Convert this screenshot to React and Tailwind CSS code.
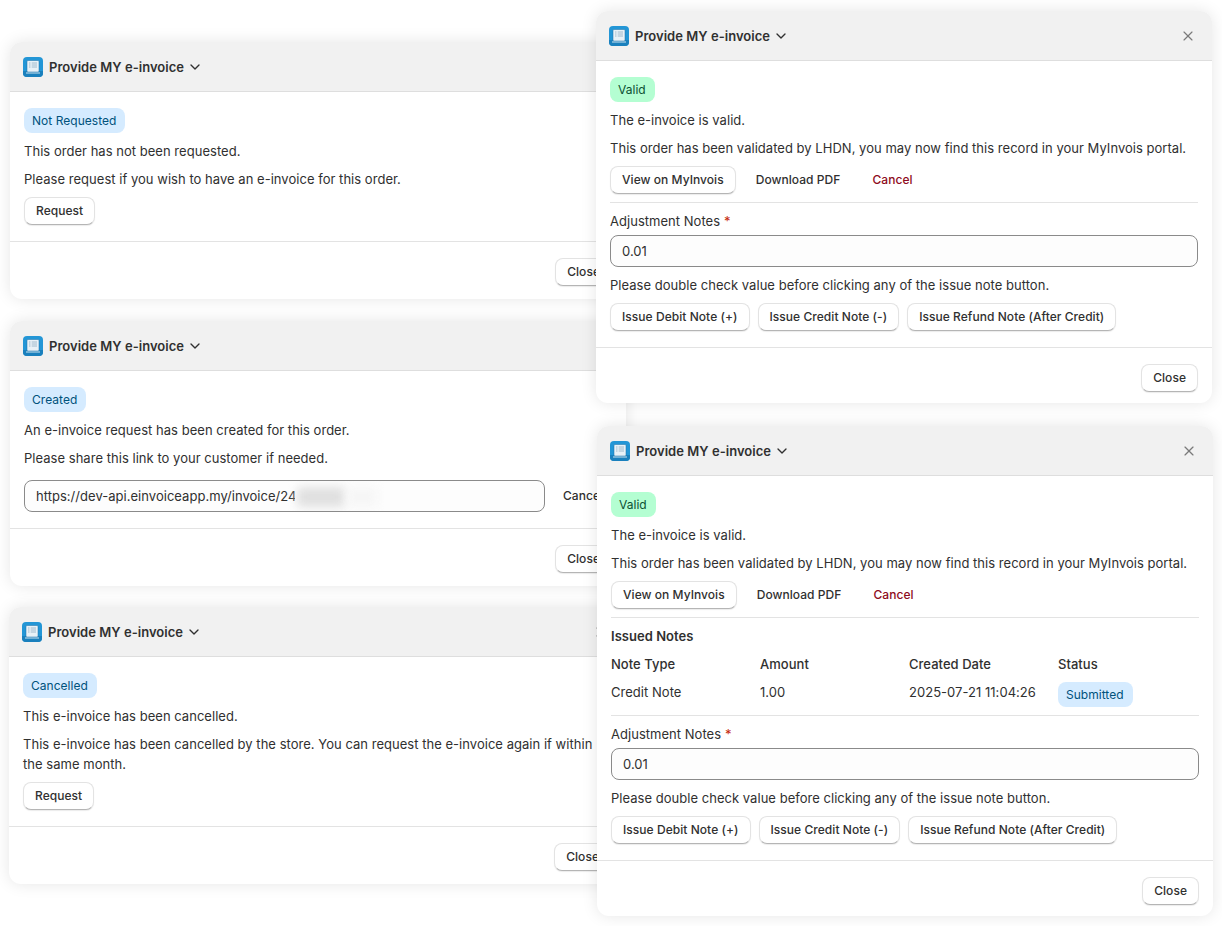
import React from 'react';
import { ChevronDown, X } from 'lucide-react';

const AppIcon = () => (
  <svg width="20" height="20" viewBox="0 0 20 20" className="shrink-0">
    <rect width="20" height="20" rx="4" fill="#2396d6" />
    <path d="M0 14 L20 14 V16 A4 4 0 0 1 16 20 H4 A4 4 0 0 1 0 16 Z" fill="#1a80bd" />
    <rect x="4" y="3.5" width="12" height="11.5" rx="1" fill="#e8f1f7" stroke="#1a6fa5" strokeWidth="0.5" />
    <path d="M3 15.5 H17 V16.4 H3 Z" fill="#c9e2f0" />
    <path d="M6 6 H7.5 M6 8 H7.5 M6 10 H7.5 M8.7 6 H14 M8.7 8 H14 M8.7 10 H14" stroke="#8fadc1" strokeWidth="0.8" />
  </svg>
);

const Button = ({ children }) => (
  <button className="h-7 px-[11px] rounded-lg bg-white text-xs tracking-[0.05px] text-[#303030] font-medium border border-[#e3e3e3] border-b-[#b5b5b5] shadow-[0_1px_1px_rgba(0,0,0,0.08)] whitespace-nowrap">
    {children}
  </button>
);

const PlainButton = ({ children, danger }) => (
  <button className={`h-7 px-3 shrink-0 text-xs tracking-[0.05px] font-medium whitespace-nowrap ${danger ? 'text-[#8e0b21]' : 'text-[#303030]'}`}>
    {children}
  </button>
);

const Badge = ({ children, green }) => (
  <span className={`self-start justify-self-start h-[25px] pl-2 pr-[9px] rounded-lg text-xs flex items-center ${green ? 'bg-[#b4fed2] text-[#0c5132]' : 'bg-[#d5ebff] text-[#00527c]'}`}>
    {children}
  </span>
);

const Divider = () => <div className="h-px bg-[#e3e3e3]" />;

const Modal = ({ className, footerClass, children }) => (
  <div className={`absolute rounded-xl bg-white overflow-hidden shadow-[0_0_16px_rgba(0,0,0,0.1)] ${className}`}>
    <div className="h-[50px] px-[13px] bg-[#f1f1f1] border-b border-[#dedede] flex items-center">
      <AppIcon />
      <span className="ml-1.5 text-[13px] font-semibold text-[#303030]">Provide MY e-invoice</span>
      <ChevronDown size={16} className="ml-[3px] text-[#303030]" />
      <X size={16} strokeWidth={1.75} className="ml-auto mr-[3px] text-[#7a7a7a]" />
    </div>
    <div className="px-[14px] pt-4 pb-4 flex flex-col gap-2">{children}</div>
    <div className={`border-t border-[#e3e3e3] px-[14px] pt-4 flex justify-end ${footerClass}`}>
      <Button>Close</Button>
    </div>
  </div>
);

const IssueSection = () => (
  <>
    <div className="flex items-center gap-1">
      <span>Adjustment Notes</span>
      <span className="text-[#c5280c]">*</span>
    </div>
    <div className="h-8 -mt-1 px-[11px] rounded-lg border border-[#8a8a8a] bg-[#fdfdfd] flex items-center">0.01</div>
    <p>Please double check value before clicking any of the issue note button.</p>
    <div className="flex gap-2">
      <Button>Issue Debit Note (+)</Button>
      <Button>Issue Credit Note (-)</Button>
      <Button>Issue Refund Note (After Credit)</Button>
    </div>
  </>
);

const ValidHead = () => (
  <>
    <Badge green>Valid</Badge>
    <p>The e-invoice is valid.</p>
    <p>This order has been validated by LHDN, you may now find this record in your MyInvois portal.</p>
    <div className="flex gap-2">
      <Button>View on MyInvois</Button>
      <PlainButton>Download PDF</PlainButton>
      <PlainButton danger>Cancel</PlainButton>
    </div>
    <Divider />
  </>
);

export default function App() {
  return (
    <div className="relative w-[1222px] h-[926px] bg-white overflow-hidden text-[13px] leading-5 tracking-[0.03px] text-[#303030] font-['Inter',sans-serif]">
      <Modal className="left-[10px] top-[42px] w-[616px]" footerClass="pb-[13px]">
        <Badge>Not Requested</Badge>
        <p>This order has not been requested.</p>
        <p>Please request if you wish to have an e-invoice for this order.</p>
        <div><Button>Request</Button></div>
      </Modal>

      <Modal className="left-[10px] top-[321px] w-[616px]" footerClass="pb-[13px]">
        <Badge>Created</Badge>
        <p>An e-invoice request has been created for this order.</p>
        <p>Please share this link to your customer if needed.</p>
        <div className="flex items-center gap-1.5 mt-1">
          <div className="relative w-[521px] shrink-0 h-8 px-[11px] rounded-lg border border-[#8a8a8a] bg-[#fdfdfd] flex items-center overflow-hidden">
            <span>https://dev-api.einvoiceapp.my/invoice/24</span>
            <div className="absolute left-[270px] top-1 w-[52px] h-6 bg-[#fdfdfd]" />
            <div className="absolute left-[272px] top-1.5 w-[48px] h-5 rounded bg-[#e0e0e0] blur-[5px]" />
            <div className="absolute left-[322px] top-1.5 w-[30px] h-5 bg-[#f6f6f6] blur-[5px]" />
          </div>
          <PlainButton>Cancel</PlainButton>
        </div>
      </Modal>

      <Modal className="left-[9px] top-[607px] w-[616px]" footerClass="pb-[13px]">
        <Badge>Cancelled</Badge>
        <p>This e-invoice has been cancelled.</p>
        <p>This e-invoice has been cancelled by the store. You can request the e-invoice again if within the same month.</p>
        <div><Button>Request</Button></div>
      </Modal>

      <Modal className="left-[596px] top-[11px] w-[616px]" footerClass="pb-[11px]">
        <ValidHead />
        <IssueSection />
      </Modal>

      <Modal className="left-[597px] top-[426px] w-[616px]" footerClass="pb-[11px]">
        <ValidHead />
        <p className="font-semibold">Issued Notes</p>
        <div className="grid grid-cols-[149px_149px_149px_1fr] gap-y-2">
          <span className="font-medium">Note Type</span>
          <span className="font-medium">Amount</span>
          <span className="font-medium">Created Date</span>
          <span className="font-medium">Status</span>
          <span>Credit Note</span>
          <span>1.00</span>
          <span>2025-07-21 11:04:26</span>
          <Badge>Submitted</Badge>
        </div>
        <Divider />
        <IssueSection />
      </Modal>
    </div>
  );
}
